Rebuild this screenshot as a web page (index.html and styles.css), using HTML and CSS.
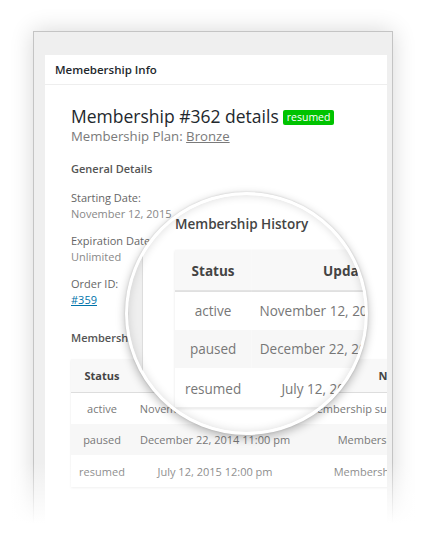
FILE: index.html
```html
<!DOCTYPE html>
<html>
<head>
<meta charset="utf-8">
<link rel="stylesheet" href="styles.css">
</head>
<body>
<div class="stage">
  <div class="frame">
    <div class="panel">
      <div class="panel-head">Memebership Info</div>
      <div class="panel-body">
        <h2 class="title">Membership #362 details <span class="badge">resumed</span></h2>
        <p class="plan">Membership Plan: <a class="plan-link">Bronze</a></p>
        <h3 class="section">General Details</h3>
        <dl class="details">
          <dt>Starting Date:</dt>
          <dd>November 12, 2015</dd>
          <dt>Expiration Date:</dt>
          <dd>Unlimited</dd>
          <dt>Order ID:</dt>
          <dd><a class="order-link">#359</a></dd>
        </dl>
        <div class="history">
          <h3 class="section history-title">Membership History</h3>
          <table class="hist-table">
            <colgroup><col class="c1"><col class="c2"><col class="c3"></colgroup>
            <thead><tr><th>Status</th><th>Updated</th><th>Note</th></tr></thead>
            <tbody>
              <tr><td>active</td><td>November 12, 2015 10:00 am</td><td>Membership successfully created</td></tr>
              <tr class="alt"><td>paused</td><td>December 22, 2014 11:00 pm</td><td>Membership paused.</td></tr>
              <tr><td>resumed</td><td>July 12, 2015 12:00 pm</td><td>Membership resumed.</td></tr>
            </tbody>
          </table>
        </div>
      </div>
    </div>
  </div>
</div>
<div class="fade"></div>
<div class="lens">
  <div class="lens-view">
    <div class="lens-frame">
      <div class="lens-panel">
        <div class="history">
          <h3 class="section history-title lens-title">Membership History</h3>
          <table class="hist-table">
            <colgroup><col class="c1"><col class="c2"><col class="c3"></colgroup>
            <thead><tr><th>Status</th><th>Updated</th><th>Note</th></tr></thead>
            <tbody>
              <tr><td>active</td><td>November 12, 2015 10:00 am</td><td>Membership successfully created</td></tr>
              <tr class="alt"><td>paused</td><td>December 22, 2014 11:00 pm</td><td>Membership paused.</td></tr>
              <tr><td>resumed</td><td>July 12, 2015 12:00 pm</td><td>Membership resumed.</td></tr>
            </tbody>
          </table>
        </div>
      </div>
    </div>
  </div>
</div>
</body>
</html>
```
FILE: styles.css
```css
* { box-sizing: border-box; }
html, body {
  margin: 0;
  padding: 0;
  background: #fff;
  width: 421px;
  height: 552px;
  overflow: hidden;
  font-family: "Open Sans", "Liberation Sans", sans-serif;
  color: #555;
}
.stage {
  padding: 31px 28px 0 33px;
}
.frame {
  height: 510px;
  background: #efefef;
  border: 1px solid #c4c4c4;
  border-bottom: none;
  padding: 23px 5px 0 11px;
  box-shadow: 0 0 22px rgba(0,0,0,0.16);
}
.panel {
  background: #fff;
  height: 100%;
  overflow: hidden;
}
.panel-head {
  height: 30px;
  line-height: 29px;
  padding: 0 10px;
  border-bottom: 1px solid #eee;
  font-size: 11.5px;
  font-weight: 600;
  color: #23282d;
}
.panel-body {
  padding: 19px 0 0 26px;
}
.title {
  margin: 0;
  font-size: 17.5px;
  font-weight: 400;
  line-height: 24px;
  color: #23282d;
  display: flex;
  align-items: center;
  gap: 4px;
  white-space: nowrap;
}
.badge {
  display: inline-block;
  background: #00c300;
  color: #fff;
  font-size: 10.5px;
  line-height: 15px;
  height: 15px;
  padding: 0 4px;
  border-radius: 2px;
  margin-top: 2px;
}
.plan {
  margin: 0;
  font-size: 13.2px;
  line-height: 16px;
  color: #7a7a7a;
}
.plan-link { color: #7a7a7a; text-decoration: underline; }
.section {
  margin: 0;
  font-size: 11px;
  font-weight: 600;
  color: #555;
  line-height: 15px;
}
.panel-body > .section { margin-top: 17px; }
.details {
  margin: 14px 0 0;
  font-size: 11px;
  line-height: 16px;
}
.details dt { color: #666; font-weight: 500; }
.details dd { margin: 0 0 11px; color: #888; }
.order-link { color: #0073aa; text-decoration: underline; }
.history { margin-top: 22px; }
.history-title { margin-bottom: 14px; }
.hist-table {
  width: 416px;
  table-layout: fixed;
  border-collapse: collapse;
  font-size: 11px;
  color: #777;
  text-align: center;
  background: #fff;
  box-shadow: 0 1px 2px rgba(0,0,0,0.1);
}
.hist-table .c1 { width: 62px; }
.hist-table .c2 { width: 164px; }
.hist-table .c3 { width: 190px; }
.hist-table th {
  height: 33px;
  background: #f8f8f8;
  border-bottom: 1px solid #ddd;
  font-weight: 700;
  color: #444;
  padding: 0;
}
.hist-table td {
  height: 31.7px;
  padding: 0;
  white-space: nowrap;
  overflow: hidden;
}
.hist-table tr.alt td { background: #f7f7f7; }
.fade {
  position: absolute;
  left: 0;
  top: 462px;
  width: 421px;
  height: 90px;
  background: linear-gradient(to bottom, rgba(255,255,255,0) 0%, #fff 68%);
}
.lens {
  position: absolute;
  left: 125px;
  top: 192px;
  width: 243px;
  height: 243px;
  border: 3px solid #fff;
  border-radius: 50%;
  overflow: hidden;
  background: #fff;
  box-shadow: 0 3px 10px rgba(0,0,0,0.28), 0 0 2px rgba(0,0,0,0.15);
}
.lens::after {
  content: "";
  position: absolute;
  inset: 0;
  border-radius: 50%;
  box-shadow: inset 0 0 10px rgba(0,0,0,0.14);
}
.lens-view {
  position: absolute;
  left: -1px;
  top: -30px;
  transform: scale(1.23);
  transform-origin: 0 0;
}
.lens-frame {
  width: 360px;
  background: #efefef;
  border-left: 1px solid #c4c4c4;
  padding-left: 11px;
}
.lens-panel {
  background: #fff;
  padding: 40px 0 80px 26px;
  border-left: 1px solid #ddd;
}
.lens-panel .history { margin-top: 0; }
.lens-title { color: #444; }
```
